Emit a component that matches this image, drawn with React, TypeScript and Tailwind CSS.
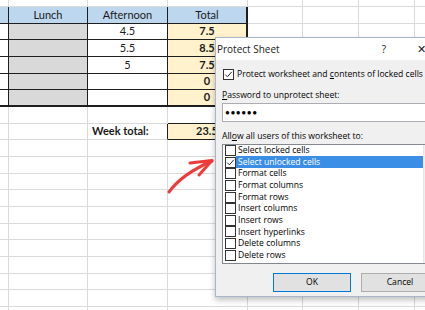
import React from 'react'

const afternoon = ['4.5', '5.5', '5', '', '']
const totals = ['7.5', '8.5', '7.5', '0', '0']

const permissions = [
  'Select locked cells',
  'Select unlocked cells',
  'Format cells',
  'Format columns',
  'Format rows',
  'Insert columns',
  'Insert rows',
  'Insert hyperlinks',
  'Delete columns',
  'Delete rows'
]

function cellStyle (r: number, c: number): { cls: string, text: string } {
  const inTable = r >= 1 && r <= 6 && c <= 3
  let cls = 'border-r border-b flex items-center justify-center overflow-hidden whitespace-nowrap '
  let text = ''
  if (inTable) {
    cls += 'border-r-[#1e1e1e] border-b-[#1e1e1e] '
    if (r === 1) {
      cls += 'bg-[#bdd7ee] '
      text = ['', 'Lunch', 'Afternoon', 'Total'][c]
    } else if (c === 1) {
      cls += 'bg-[#d9d9d9] '
    } else if (c === 2) {
      cls += 'bg-white '
      text = afternoon[r - 2]
    } else if (c === 3) {
      cls += 'bg-[#fff2cc] font-bold '
      text = totals[r - 2]
    } else {
      cls += 'bg-white '
    }
    if (r === 6) cls += 'border-b-2 '
    if (c === 3) cls += 'border-r-2 '
  } else if (r === 7 && c === 3) {
    cls += 'border-r-[#dadada] border-b-[#1e1e1e] bg-white '
  } else if (r === 8 && c === 2) {
    cls += 'border-r-[#1e1e1e] border-b-[#dadada] bg-white font-bold !justify-start pl-[4px] '
    text = 'Week total:'
  } else if (r === 8 && c === 3) {
    cls += 'border-r-[#1e1e1e] border-b-[#1e1e1e] border-r-2 bg-[#fff2cc] font-bold '
    text = '23.5'
  } else {
    cls += 'border-[#dadada] bg-white '
  }
  return { cls, text }
}

function Check ({ checked }: { checked: boolean }): JSX.Element {
  return (
    <span className="flex h-[11px] w-[11px] shrink-0 items-center justify-center border border-[#333] bg-white">
      {checked && (
        <svg width="9" height="9" viewBox="0 0 9 9">
          <polyline points="1.2,4.6 3.4,6.8 7.8,1.8" fill="none" stroke="#222" strokeWidth="1" />
        </svg>
      )}
    </span>
  )
}

export default function App (): JSX.Element {
  const rows = Array.from({ length: 20 }, (_, i) => i)
  const cols = Array.from({ length: 8 }, (_, i) => i)

  return (
    <div className="relative h-[310px] w-[425px] overflow-hidden bg-white">
      <div
        className="grid grid-cols-[9px_79px_80px_80px_55px_56px_56px_60px] grid-rows-[7px_repeat(19,16.67px)] text-[11px] text-[#1a1a1a]"
        style={{ fontFamily: 'Lato, "Liberation Sans", sans-serif' }}
      >
        {rows.map((r) =>
          cols.map((c) => {
            const { cls, text } = cellStyle(r, c)
            return (
              <div key={`${r}-${c}`} className={cls}>
                {text}
              </div>
            )
          })
        )}
      </div>

      {/* red arrow pointing at the option */}
      <svg className="pointer-events-none absolute left-0 top-0" width="425" height="310">
        <path d="M169 192 Q182 174 212 161" fill="none" stroke="#f03a3a" strokeWidth="3" strokeLinecap="round" />
        <path d="M190 163 L212 160.5 L199 175" fill="none" stroke="#f03a3a" strokeWidth="3" strokeLinecap="round" strokeLinejoin="round" />
      </svg>

      {/* Protect Sheet dialog */}
      <div
        className="absolute left-[215px] top-[37px] flex h-[260px] w-[240px] flex-col border border-[#a9b6c9] bg-[#f0f0f0] text-[8.6px] text-black shadow-[0_3px_6px_rgba(0,0,0,0.25)]"
        style={{ fontFamily: '"Open Sans", "Noto Sans", sans-serif' }}
      >
        <div className="flex h-[22px] items-center bg-white pl-[1px] text-[10px] text-[#222]">
          <span>Protect Sheet</span>
          <span className="ml-[102px]">?</span>
          <span className="ml-[31px] text-[11px]">✕</span>
        </div>

        <div className="flex flex-col px-[6px]">
          <div className="mt-[8px] flex items-center gap-[3px] pl-[1px]">
            <Check checked />
            <span>
              Protect worksheet and <span className="underline">c</span>ontents of locked cells
            </span>
          </div>

          <div className="mt-[8px]">
            <span className="underline">P</span>assword to unprotect sheet:
          </div>
          <div className="mt-[1px] flex h-[19px] items-center border border-[#abadb3] bg-white pl-[2px] text-[8px] tracking-[0.6px] text-black">
            ●●●●●●
          </div>

          <div className="mt-[8px]">
            All<span className="underline">o</span>w all users of this worksheet to:
          </div>
          <div className="mt-[1px] flex h-[120px] border border-[#828790] bg-white">
            <div className="flex flex-1 flex-col">
              {permissions.map((p, i) => (
                <div key={p} className="flex h-[11.65px] items-center pl-[2px]">
                  <Check checked={i === 1} />
                  <span
                    className={`flex h-full flex-1 items-center pl-[2px] ${i === 1 ? 'bg-[#3a8ee6] text-white' : ''}`}
                  >
                    {p}
                  </span>
                </div>
              ))}
            </div>
            <div className="mr-[8px] w-[16px] border-l border-[#e6e6e6] bg-[#f0f0f0]">
              <div className="ml-[1px] h-[68px] bg-[#cdcdcd]" />
            </div>
          </div>

          <div className="mt-[9px] flex gap-[10px] pl-[51px]">
            <button className="h-[19px] w-[78px] border border-[#0078d7] bg-[#e1e1e1] text-[8.6px]">OK</button>
            <button className="h-[19px] w-[78px] border border-[#adadad] bg-[#e1e1e1] text-[8.6px]">Cancel</button>
          </div>
        </div>
      </div>
    </div>
  )
}
